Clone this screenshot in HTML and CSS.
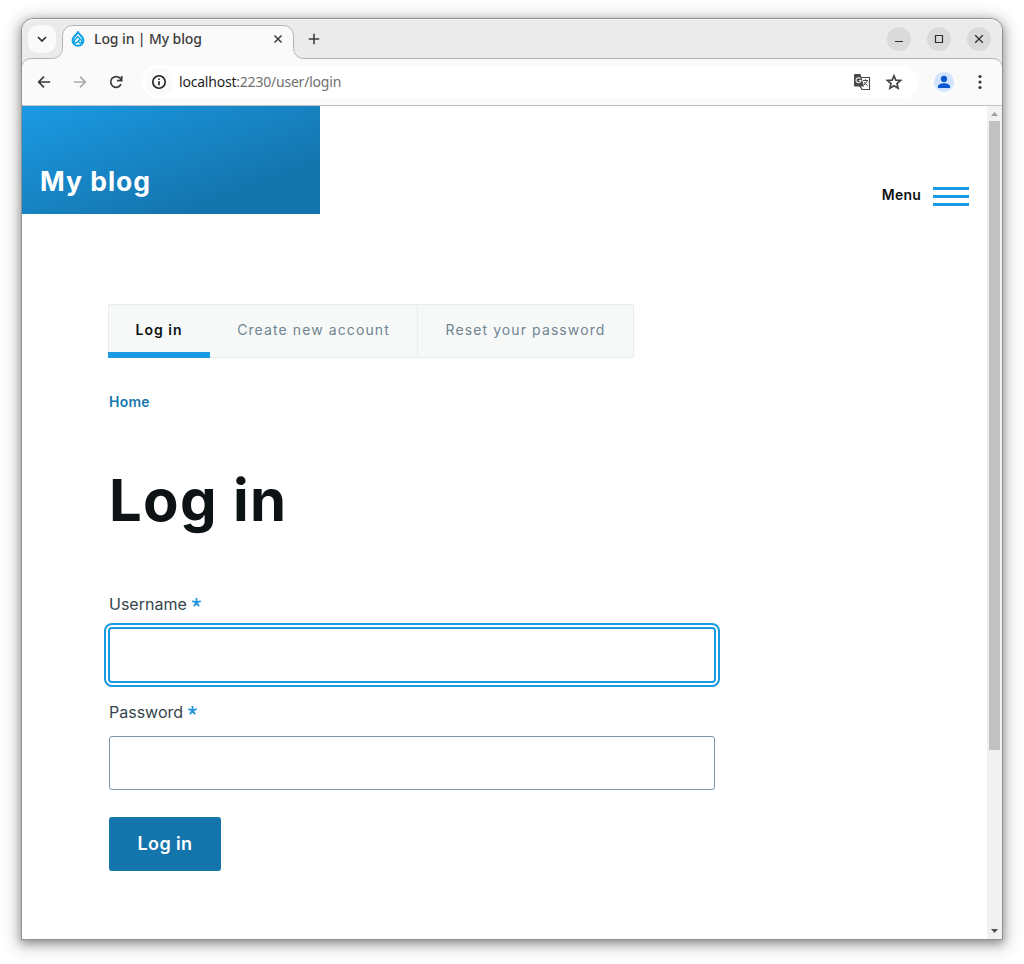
FILE: index.html
```html
<!DOCTYPE html>
<html lang="en">
<head>
<meta charset="utf-8">
<title>Log in | My blog</title>
<link rel="stylesheet" href="styles.css">
</head>
<body>
<div class="window">
  <header class="chrome">
    <svg class="chrome-shape" width="980" height="87" viewBox="0 0 980 87" fill="none">
      <path d="M-.5 49C-.5 43 4 39.500 10 39.500H30.500a10 10 0 0 0 10-10V16.500a10 10 0 0 1 10-10H261.500a10 10 0 0 1 10 10V29.500a10 10 0 0 0 10 10H970C976 39.500 980.500 43 980.500 49V90H-.5z" fill="#fafafa" stroke="#b3b3b3"/>
    </svg>
    <div class="tabstrip">
      <button class="tab-search" aria-label="Search tabs"><svg width="12" height="12" viewBox="0 0 12 12" fill="none" stroke="#303030" stroke-width="1.700"><path d="M2 4l4 4 4-4"/></svg></button>
      <div class="tab">
        <svg class="favicon" width="14" height="16" viewBox="0 0 14 16" fill="none" stroke="#0aa1e6">
          <path d="M7 1.300C7.700 3.500 12.400 5.400 12.400 9.600A5.400 5.400 0 0 1 7 14.800 5.400 5.400 0 0 1 1.600 9.600C1.600 5.400 6.300 3.500 7 1.300z" stroke-width="2"/>
          <path d="M7 5.300L4 8.700c-1.500 1.800-.6 3.300.6 3.300 1 0 1.600-.7 4.400-3.700M7 5.800l3.300 3.400c1 1.300.3 2.800-.9 2.800-.7 0-1.300-.6-1.900-1.300" stroke-width="1.300"/>
        </svg>
        <span class="tab-title">Log in | My blog</span>
        <svg class="tab-close" width="10" height="10" viewBox="0 0 10 10" stroke="#3c3c3c" stroke-width="1.500"><path d="M1.500 1.500l7 7M8.500 1.500l-7 7"/></svg>
      </div>
      <svg class="new-tab" width="12" height="12" viewBox="0 0 12 12" stroke="#3c3c3c" stroke-width="1.600"><path d="M6 .8v10.400M.8 6h10.400"/></svg>
      <div class="controls">
        <button aria-label="Minimize"><svg width="12" height="12" viewBox="0 0 12 12" stroke="#303030"><path d="M2 8.500h8"/></svg></button>
        <button aria-label="Maximize"><svg width="12" height="12" viewBox="0 0 12 12" fill="none" stroke="#303030" stroke-width="1.200"><path d="M2.500 2.500h7v7h-7z"/></svg></button>
        <button aria-label="Close"><svg width="12" height="12" viewBox="0 0 12 12" stroke="#303030" stroke-width="1.300"><path d="M2.200 2.200l7.600 7.600M9.800 2.200L2.200 9.800"/></svg></button>
      </div>
    </div>
    <div class="toolbar">
      <svg class="nav-icon" width="16" height="16" viewBox="0 0 16 16" fill="none" stroke="#3a3a3a" stroke-width="1.700"><path d="M14.200 8H3M8 2.700L2.700 8 8 13.300"/></svg>
      <svg class="nav-icon" width="16" height="16" viewBox="0 0 16 16" fill="none" stroke="#a9a9a9" stroke-width="1.700"><path d="M1.800 8H13M8 2.700L13.300 8 8 13.300"/></svg>
      <svg class="nav-icon" width="16" height="16" viewBox="0 0 16 16" fill="none" stroke="#3a3a3a" stroke-width="1.700"><path d="M13 10.200A5.400 5.400 0 1 1 12 4.200L13.500 6M13.700 2v4.700H9"/></svg>
      <div class="address">
        <span class="site-info"><svg width="16" height="16" viewBox="0 0 16 16" fill="none" stroke="#1f1f1f" stroke-width="1.600"><circle cx="8" cy="8" r="6.200"/><path d="M8 7.200v4M8 4.500v1.600"/></svg></span>
        <span class="url"><b>localhost</b>:2230/user/login</span>
        <svg class="translate" width="18" height="18" viewBox="0 0 18 18" fill="none">
          <path d="M7 4.500h9.500v12H9L7 13z" fill="#fff" stroke="#4a4a4a" stroke-width="1.200"/>
          <path d="M10 7.500h5M12.500 6.200v1.300M14.200 7.500c-.5 2-1.700 3.300-3.500 4.600M11 9c.8 1.500 2 2.700 3.600 3.700" stroke="#4a4a4a"/>
          <path d="M2 1h5.500l3.500 12.500H2a1 1 0 0 1-1-1V2a1 1 0 0 1 1-1z" fill="#4a4a4a"/>
          <path d="M7.500 5.700A2.500 2.500 0 1 0 8 7.500H5.800" stroke="#fff" stroke-width="1.100"/>
        </svg>
        <svg class="star" width="18" height="18" viewBox="0 0 18 18" fill="none" stroke="#454545" stroke-width="1.700"><path d="M9 2.700l1.800 4.400 4.800.4-3.600 3.100 1.100 4.600L9 12.700l-4.100 2.500L6 10.600 2.400 7.500l4.800-.4z"/></svg>
      </div>
      <svg class="profile" width="20" height="20" viewBox="0 0 20 20"><circle cx="10" cy="10" r="10" fill="#d3e3fd"/><circle cx="10" cy="6.900" r="3.100" fill="#0b57d0"/><path d="M4 16v-1.700c0-2 3.600-3.100 6-3.100s6 1.100 6 3.100V16z" fill="#0b57d0"/></svg>
      <svg class="more" width="4" height="16" viewBox="0 0 4 16" fill="#3a3a3a"><circle cx="2" cy="2.500" r="1.600"/><circle cx="2" cy="8" r="1.600"/><circle cx="2" cy="13.500" r="1.600"/></svg>
    </div>
  </header>
  <div class="viewport">
    <div class="page">
      <div class="site-header">
        <div class="brand">My blog</div>
        <div class="menu"><span>Menu</span><div class="bars"><i></i><i></i><i></i></div></div>
      </div>
      <main>
        <nav class="tabs"><a class="active"><span>Log in</span></a><a class="create">Create new account</a><a class="reset">Reset your password</a></nav>
        <div class="breadcrumb">Home</div>
        <h1>Log in</h1>
        <form>
          <label><span class="user-label">Username</span><svg class="required" width="9" height="9" viewBox="0 0 9 9" stroke="#2494db" stroke-width="1.800"><path d="M4.500 0v4.500M.3 3.200l4.200 1.300M8.700 3.200L4.500 4.500M1.900 8.200l2.600-3.700M7.100 8.200L4.500 4.500"/></svg></label>
          <input class="focused" type="text" aria-label="Username">
          <label class="second"><span class="pass-label">Password</span><svg class="required" width="9" height="9" viewBox="0 0 9 9" stroke="#2494db" stroke-width="1.800"><path d="M4.500 0v4.500M.3 3.200l4.200 1.300M8.700 3.200L4.500 4.500M1.900 8.200l2.600-3.700M7.100 8.200L4.500 4.500"/></svg></label>
          <input type="password" aria-label="Password">
          <button class="submit" type="button">Log in</button>
        </form>
      </main>
    </div>
    <div class="scrollbar">
      <svg width="15" height="15" viewBox="0 0 15 15" fill="#a0a0a0"><path d="M4 10l3.500-4L11 10z"/></svg>
      <div class="thumb"></div>
      <svg width="15" height="15" viewBox="0 0 15 15" fill="#505050"><path d="M4 5h7L7.500 9z"/></svg>
    </div>
  </div>
</div>
</body>
</html>
```
FILE: styles.css
```css
* { box-sizing: border-box; }
body { margin: 0; padding: 19px 22px 25px; background: #fff; font-family: Inter, "Liberation Sans", sans-serif; }
button { border: 0; padding: 0; font-family: inherit; }
svg { display: block; flex: none; }

.window { width: 980px; height: 920px; display: flex; flex-direction: column; border-radius: 12px 12px 0 0; background: #fff; box-shadow: 0 0 0 1px #929292, 0 3px 8px 1px rgba(0,0,0,.3), 0 3px 16px 5px rgba(0,0,0,.22); }

.chrome { position: relative; height: 87px; flex: none; background: #ebebeb; border-radius: 12px 12px 0 0; border-bottom: 1px solid #c2c2c2; box-shadow: inset 0 1px #f8f8f8; overflow: hidden; }
.chrome-shape { position: absolute; inset: 0; }
.tabstrip, .toolbar { position: relative; display: flex; align-items: center; }
.tabstrip { height: 40px; padding: 0 11px 0 6px; }
.tab-search { width: 28px; height: 28px; border-radius: 10px; background: #fafafa; display: grid; place-items: center; }
.tab { width: 231px; height: 33px; margin-left: 7px; padding: 0 11px 0 8px; display: flex; align-items: center; }
.tab-title { margin-left: 9px; font: 500 14px/20px "Noto Sans", "Open Sans", sans-serif; color: #3c3c3c; letter-spacing: -.1px; white-space: nowrap; }
.tab-close { margin-left: auto; }
.new-tab { margin-left: 14px; }
.controls { margin-left: auto; display: flex; gap: 16px; }
.controls button { width: 24px; height: 24px; border-radius: 50%; background: #dadada; display: grid; place-items: center; }

.toolbar { height: 46px; padding: 0 20px 0 14px; }
.nav-icon { margin-right: 20px; }
.address { width: 776px; height: 34px; margin-left: -2px; padding: 0 15px 0 3px; border-radius: 17px; background: #fff; display: flex; align-items: center; }
.site-info { width: 28px; height: 28px; border-radius: 50%; background: #fafafa; display: grid; place-items: center; }
.url { margin-left: 6px; font: 14px/20px "Noto Sans", "Open Sans", sans-serif; letter-spacing: -.21px; color: #707070; white-space: nowrap; }
.url b { font-weight: 400; color: #1f1f1f; }
.translate { margin-left: auto; }
.star { margin-left: 14px; }
.profile { margin-left: 16px; }
.more { margin-left: auto; }

.viewport { flex: 1; display: flex; background: #fff; }
.page { width: 965px; }
.site-header { display: flex; justify-content: space-between; height: 108px; }
.brand { width: 298px; padding: 58px 0 0 18px; background: linear-gradient(160deg, #1b9ae4 0%, #1474ac 78.660%); font-size: 26.500px; line-height: 34px; font-weight: 700; letter-spacing: 1px; color: #fff; white-space: nowrap; }
.menu { display: flex; align-items: center; gap: 12px; padding: 72px 18px 0 0; font-size: 14px; line-height: 18px; font-weight: 600; letter-spacing: .2px; color: #0d1214; }
.menu span { padding-bottom: 2px; }
.bars { width: 36px; display: flex; flex-direction: column; gap: 5px; padding-top: 1px; }
.bars i { height: 3px; background: #1b9ae4; }

main { padding: 90px 0 0 87px; }
.tabs { display: flex; width: 526px; height: 54px; margin-left: -1px; background: #f7f9f8; border: 1px solid #e7eded; }
.tabs a { display: flex; align-items: center; justify-content: center; padding-bottom: 3px; border-right: 1px solid #e7eded; font-size: 14px; letter-spacing: 1.100px; color: #6e8591; white-space: nowrap; }
.tabs .active { width: 102px; height: 54px; margin: -1px 0 -1px -1px; padding-top: 5px; border-bottom: 6px solid #1b9ae4; border-right: 0; font-weight: 600; letter-spacing: 1px; color: #0d1214; }
.tabs .create { width: 208px; }
.tabs .reset { flex: 1; border: 0; }
.breadcrumb { margin-top: 35px; font-size: 14px; line-height: 18px; font-weight: 600; letter-spacing: .25px; color: #1777ad; }
h1 { margin: 53px 0 0; font-size: 58px; line-height: 72px; font-weight: 700; letter-spacing: 1.300px; color: #0d1214; white-space: nowrap; }
form { width: 606px; padding-top: 56px; }
label { display: flex; gap: 5px; height: 24px; align-items: center; font-size: 16px; line-height: 24px; color: #36454c; }
.required { margin-top: -4px; }
input { display: block; width: 606px; height: 54px; margin: 0; padding: 0 16px; border: 1px solid #7e96a7; border-radius: 3px; background: #fff; font: 18px Inter, sans-serif; }
label + input { margin-top: 12px; }
label + .focused { width: 608px; height: 56px; margin: 11px -1px 0; border: 2px solid #1b9ae4; border-radius: 4px; outline: 2px solid #1b9ae4; outline-offset: 2px; }
.second { margin-top: 17px; }
.submit { display: block; width: 112px; height: 54px; margin-top: 27px; padding-bottom: 1px; border-radius: 3px; background: #1474ac; color: #fff; font-size: 18px; font-weight: 600; letter-spacing: .4px; }

.scrollbar { width: 15px; display: flex; flex-direction: column; background: #f1f1f1; }
.thumb { width: 11px; height: 629px; margin: 0 auto auto 2px; background: #c1c1c1; }
```
